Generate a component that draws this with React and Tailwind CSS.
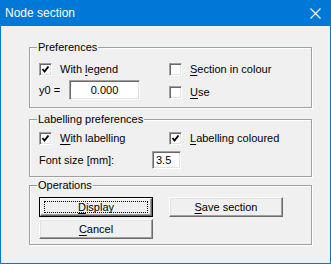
const font = { fontFamily: '"Liberation Sans", Arial, sans-serif' };

function Acc({ pre = "", u, post = "" }) {
  return (
    <span className="whitespace-pre">
      {pre}
      <span className="underline underline-offset-[2px]">{u}</span>
      {post}
    </span>
  );
}

function Box({ checked }) {
  return (
    <span className="relative block w-[13px] h-[13px] shrink-0 bg-white border border-t-[#a0a0a0] border-l-[#a0a0a0] border-r-white border-b-white shadow-[inset_1px_1px_0_#696969,inset_-1px_-1px_0_#e3e3e3]">
      {checked && (
        <svg className="absolute -left-px -top-px" width="13" height="13" viewBox="0 0 13 13">
          <polyline points="3.5,6 5.5,8.5 9.5,3.5" fill="none" stroke="#000" strokeWidth="1.9" />
        </svg>
      )}
    </span>
  );
}

function Check({ checked, children }) {
  return (
    <div className="flex items-center h-[13px] gap-[8px]">
      <Box checked={checked} />
      <span className="leading-none">{children}</span>
    </div>
  );
}

function Field({ value, className }) {
  return (
    <div
      className={
        "flex items-center bg-white border border-t-[#a0a0a0] border-l-[#a0a0a0] border-r-white border-b-white shadow-[inset_1px_1px_0_#696969,inset_-1px_-1px_0_#e3e3e3] " +
        className
      }
    >
      {value}
    </div>
  );
}

function Group({ title, className, children }) {
  return (
    <div className={"relative ml-[28px] w-[283px] border border-[#a0a0a0] shadow-[inset_1px_1px_0_#fff,1px_1px_0_#fff] " + className}>
      <span className="absolute left-[7px] -top-[8px] px-[1px] bg-[#f0f0f0] leading-[14px]">{title}</span>
      {children}
    </div>
  );
}

function Button({ isDefault, children }) {
  if (isDefault) {
    return (
      <div className="w-[114px] h-[20px] border border-black">
        <div className="relative h-full flex items-center justify-center bg-[#f0f0f0] border border-t-white border-l-white border-r-[#696969] border-b-[#696969] shadow-[inset_-1px_-1px_0_#a0a0a0]">
          <span className="absolute inset-x-[3px] inset-y-[2px] border border-dotted border-black"></span>
          <span className="leading-none">{children}</span>
        </div>
      </div>
    );
  }
  return (
    <div className="w-[114px] h-[20px] flex items-center justify-center bg-[#f0f0f0] border border-t-white border-l-white border-r-[#696969] border-b-[#696969] shadow-[inset_-1px_-1px_0_#a0a0a0,inset_1px_1px_0_#e3e3e3]">
      <span className="leading-none">{children}</span>
    </div>
  );
}

export default function App() {
  return (
    <div className="w-[331px] h-[264px] flex flex-col bg-[#f0f0f0] border-x border-b border-[#0078d7] text-[11px] text-black" style={font}>
      <div className="h-[26px] shrink-0 -mx-px flex items-center justify-between bg-[#0078d7] text-white pl-[5px] pr-[10px]">
        <span className="text-[12px]">Node section</span>
        <svg width="11" height="11" viewBox="0 0 11 11">
          <path d="M0.5 0.5 L10.5 10.5 M10.5 0.5 L0.5 10.5" stroke="#fff" strokeWidth="1.1" />
        </svg>
      </div>

      <Group title="Preferences" className="mt-[21px] h-[61px]">
        <div className="grid grid-cols-[130px_1fr] pl-[9px]">
          <div className="flex flex-col">
            <div className="mt-[15px]">
              <Check checked>
                <Acc pre="With " u="l" post="egend" />
              </Check>
            </div>
            <div className="mt-[4px] flex items-center h-[20px]">
              <span className="w-[30px]">y0 =</span>
              <Field value="0.000" className="w-[71px] h-[20px] justify-center" />
            </div>
          </div>
          <div className="flex flex-col">
            <div className="mt-[15px]">
              <Check>
                <Acc u="S" post="ection in colour" />
              </Check>
            </div>
            <div className="mt-[10px]">
              <Check>
                <Acc u="U" post="se" />
              </Check>
            </div>
          </div>
        </div>
      </Group>

      <Group title="Labelling preferences" className="mt-[11px] h-[58px]">
        <div className="grid grid-cols-[130px_1fr] pl-[9px] pt-[12px]">
          <Check checked>
            <Acc u="W" post="ith labelling" />
          </Check>
          <Check checked>
            <Acc u="L" post="abelling coloured" />
          </Check>
        </div>
        <div className="mt-[6px] pl-[9px] flex items-center h-[18px]">
          <span className="w-[113px]">Font size [mm]:</span>
          <Field value="3.5" className="w-[29px] h-[18px] pl-[3px]" />
        </div>
      </Group>

      <Group title="Operations" className="mt-[8px] h-[60px]">
        <div className="grid grid-cols-[130px_1fr] pl-[9px] pt-[11px]">
          <div className="flex flex-col gap-[2px]">
            <Button isDefault>
              <Acc u="D" post="isplay" />
            </Button>
            <Button>
              <Acc u="C" post="ancel" />
            </Button>
          </div>
          <div>
            <Button>
              <Acc u="S" post="ave section" />
            </Button>
          </div>
        </div>
      </Group>
    </div>
  );
}
